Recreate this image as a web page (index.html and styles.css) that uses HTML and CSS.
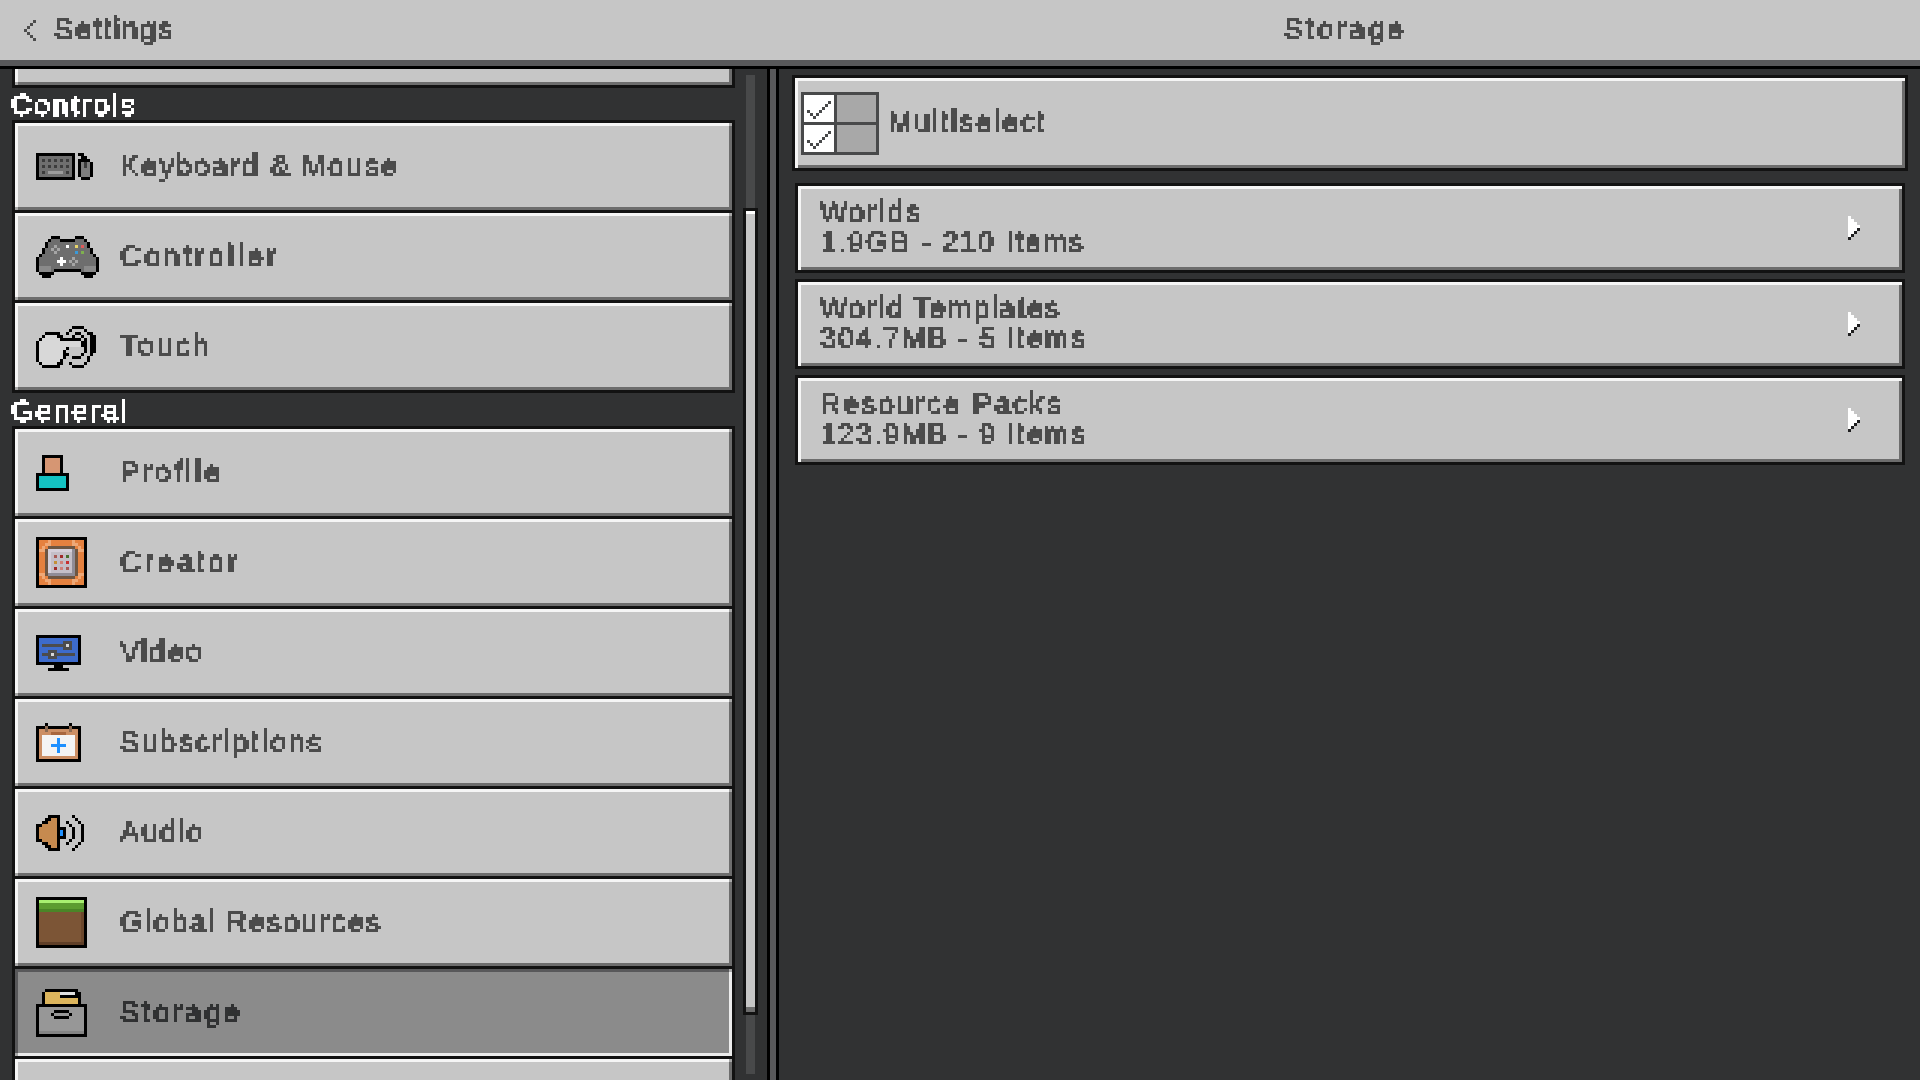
FILE: index.html
```html
<!DOCTYPE html>
<html lang="en">
<head>
<meta charset="utf-8">
<title>Storage</title>
<link rel="stylesheet" href="styles.css">
</head>
<body>
<svg class="defs" width="0" height="0" aria-hidden="true">
  <filter id="pixel" x="0" y="0" width="100%" height="100%" color-interpolation-filters="sRGB">
    <feFlood x="1" y="1" width="1" height="1"/>
    <feComposite width="3" height="3"/>
    <feTile result="grid"/>
    <feComposite in="SourceGraphic" in2="grid" operator="in"/>
    <feMorphology operator="dilate" radius="1"/>
    <feComponentTransfer>
      <feFuncA type="discrete" tableValues="0 1 1 1"/>
    </feComponentTransfer>
  </filter>
</svg>

<header class="topbar">
  <div class="back">
    <svg class="icon" width="12" height="21" viewBox="0 0 4 7"><path fill="#4c4c4c" d="M3 0h1v1H3zM2 1h1v1H2zM1 2h1v1H1zM0 3h1v1H0zM1 4h1v1H1zM2 5h1v1H2zM3 6h1v1H3z"/></svg>
    <span class="label back-label">Settings</span>
  </div>
  <div class="title"><span class="label wide">Storage</span></div>
</header>

<main class="main">
  <section class="left">
    <div class="list">
      <div class="group">
        <div class="item stub"></div>
      </div>
      <h2 class="heading heading-first"><span class="label loose">Controls</span></h2>
      <div class="group">
        <div class="item">
          <div class="slot"><svg class="icon" width="57" height="27" viewBox="0 0 19 9">
            <path d="M0 0h13v9H0zM14 0h2v1h-2zM15 1h2v1h-2zM14 2h4v1h-4zM14 3h5v5h-5zM15 8h3v1h-3z"/>
            <path fill="#6f6f6f" d="M1 1h11v7H1z"/>
            <path fill="#7d7d7d" d="M15 3h3v5h-3z"/>
            <path fill="#3c3c3c" d="M2 2h1v1H2zM4 2h1v1H4zM6 2h1v1H6zM8 2h1v1H8zM10 2h1v1h-1zM2 4h1v1H2zM4 4h1v1H4zM6 4h1v1H6zM8 4h1v1H8zM10 4h1v1h-1zM2 6h1v1H2zM10 6h1v1h-1zM16 3h1v2h-1z"/>
            <path fill="#9c9c9c" d="M4 6h5v1H4z"/>
          </svg></div>
          <span class="label">Keyboard &amp; Mouse</span>
        </div>
        <div class="item">
          <div class="slot"><svg class="icon" width="63" height="42" viewBox="0 0 21 14">
            <path d="M5 0h3v1H5zM13 0h3v1h-3zM4 1h13v1H4zM3 2h15v2H3zM2 4h17v2H2zM1 6h19v1H1zM0 7h21v5H0zM1 12h5v1H1zM15 12h5v1h-5zM2 13h3v1H2zM16 13h3v1h-3z"/>
            <path fill="#6e6e6e" d="M5 1h3v1H5zM13 1h3v1h-3zM4 2h13v2H4zM3 4h15v2H3zM2 6h17v1H2zM1 7h19v3H1zM1 10h5v2H1zM15 10h5v2h-5zM6 10h9v1H6z"/>
            <path fill="#8a8a8a" d="M1 10h4v2H1zM16 10h4v2h-4z"/>
            <path fill="#a5a5a5" d="M6 3h1v1H6zM5 4h1v1H5zM7 4h1v1H7zM6 5h1v1H6zM12 7h1v1h-1zM11 8h1v1h-1zM13 8h1v1h-1zM12 9h1v1h-1z"/>
            <path fill="#fff" d="M10 3h1v1h-1zM8 7h1v3H8zM7 8h3v1H7z"/>
            <path fill="#e8d56a" d="M13 3h1v1h-1z"/>
            <path fill="#e05a5a" d="M15 3h1v1h-1z"/>
            <path fill="#3a9ad9" d="M13 5h1v1h-1z"/>
            <path fill="#7fb04f" d="M15 5h1v1h-1z"/>
          </svg></div>
          <span class="label widest">Controller</span>
        </div>
        <div class="item">
          <div class="slot"><svg class="icon" width="60" height="42" viewBox="0 0 20 14">
            <path d="M3 2h5v1H3zM2 3h7v1H2zM1 4h14v1H1zM0 5h16v2H0zM0 7h11v1H0zM0 8h10v3H0zM0 11h9v1H0zM1 12h8v1H1zM2 13h6v1H2z"/>
            <path fill="#d8d8d8" d="M3 3h4v1H3zM2 4h6v1H2zM1 5h14v2H1zM1 7h9v1H1zM1 8h8v3H1zM1 11h7v1H1zM2 12h5v1H2z"/>
            <path d="M12 0h4v1h-4zM11 1h1v1h-1zM16 1h1v1h-1zM10 2h1v1h-1zM17 2h2v1h-2zM18 3h2v6h-2zM18 9h1v1h-1zM17 10h1v1h-1zM17 11h1v1h-1zM11 12h1v1h-1zM16 12h1v1h-1zM12 13h4v1h-4zM13 2h2v1h-2zM12 3h1v1h-1zM15 3h1v1h-1zM16 4h1v5h-1zM15 9h1v1h-1zM12 10h3v1h-3zM10 9h1v1h-1z"/>
          </svg></div>
          <span class="label wide">Touch</span>
        </div>
      </div>
      <h2 class="heading"><span class="label">General</span></h2>
      <div class="group">
        <div class="item">
          <div class="slot"><svg class="icon" width="33" height="36" viewBox="0 0 11 12">
            <path d="M2 0h7v6H2zM0 6h11v6H0z"/>
            <path fill="#d69673" d="M3 1h5v5H3z"/>
            <path fill="#14c2c2" d="M1 7h9v4H1z"/>
          </svg></div>
          <span class="label wide">Profile</span>
        </div>
        <div class="item">
          <div class="slot"><svg class="icon" width="51" height="51" viewBox="0 0 17 17">
            <path d="M0 0h17v17H0z"/>
            <path fill="#e5813f" d="M1 1h15v15H1z"/>
            <path fill="#efa876" d="M4 1h1v1H4zM12 1h1v1h-1zM3 2h2v1H3zM12 2h2v1h-2zM1 4h1v1H1zM15 4h1v1h-1zM2 3h1v2H2zM14 3h1v2h-1zM1 12h1v1H1zM15 12h1v1h-1zM2 12h1v2H2zM14 12h1v2h-1zM3 14h2v1H3zM12 14h2v1h-2zM4 15h1v1H4zM12 15h1v1h-1z"/>
            <path fill="#6e5642" d="M4 3h9v1H4zM3 4h11v9H3zM4 13h9v1H4z"/>
            <path fill="#8f8c96" d="M4 4h9v9H4z"/>
            <path fill="#d5d0da" d="M4 4h8v1H4zM4 5h1v7H4z"/>
            <path fill="#c4bfc8" d="M5 5h7v7H5z"/>
            <path fill="#a85a55" d="M6 6h1v1H6zM10 10h1v1h-1z"/>
            <path fill="#a02a2a" d="M8 6h1v1H8zM6 10h1v1H6z"/>
            <path fill="#46702e" d="M10 6h1v1h-1z"/>
            <path fill="#c49038" d="M6 8h1v1H6z"/>
            <path fill="#d08078" d="M8 8h1v1H8zM8 10h1v1H8z"/>
            <path fill="#c83030" d="M10 8h1v1h-1z"/>
          </svg></div>
          <span class="label widest">Creator</span>
        </div>
        <div class="item">
          <div class="slot"><svg class="icon" width="45" height="36" viewBox="0 0 15 12">
            <path d="M0 0h15v10H0zM6 10h3v1H6zM4 11h7v1H4z"/>
            <path fill="#3d6bcb" d="M1 1h13v8H1z"/>
            <path fill="#4c4c4c" d="M2 3h10v1H2zM9 2h3v3H9zM2 6h11v1H2zM4 5h3v3H4z"/>
            <path fill="#d8d8d8" d="M10 3h1v1h-1zM5 6h1v1H5z"/>
          </svg></div>
          <span class="label">Video</span>
        </div>
        <div class="item">
          <div class="slot"><svg class="icon" width="45" height="39" viewBox="0 0 15 13">
            <path d="M0 1h15v12H0z"/>
            <path fill="#cc8f65" d="M1 2h13v10H1z"/>
            <path fill="#f4f4f4" d="M2 4h11v7H2z"/>
            <path fill="#a8673f" d="M5 3h5v1H5z"/>
            <path d="M3 0h1v1H3zM11 0h1v1h-1z"/>
            <path fill="#8a6a52" d="M3 1h1v2H3zM11 1h1v2h-1z"/>
            <path fill="#1e90ff" d="M7 5h1v5H7zM5 7h5v1H5z"/>
          </svg></div>
          <span class="label loose">Subscriptions</span>
        </div>
        <div class="item">
          <div class="slot"><svg class="icon" width="48" height="36" viewBox="0 0 16 12">
            <path d="M4 0h4v1H4zM3 1h5v1H3zM2 2h6v1H2zM0 3h8v6H0zM2 9h6v1H2zM3 10h5v1H3zM4 11h4v1H4zM8 4h2v1H8zM9 5h1v2H9zM8 7h2v1H8z"/>
            <path fill="#c68a4f" d="M5 1h2v1H5zM4 2h3v1H4zM2 3h5v1H2zM1 4h6v4H1zM2 8h5v1H2zM4 9h3v1H4zM5 10h2v1H5z"/>
            <path fill="#1e90ff" d="M8 5h1v2H8z"/>
            <path d="M12 0h1v1h-1zM13 1h1v1h-1zM14 2h1v1h-1zM15 3h1v6h-1zM14 9h1v1h-1zM13 10h1v1h-1zM12 11h1v1h-1zM10 2h1v1h-1zM11 3h1v1h-1zM12 4h1v4h-1zM11 8h1v1h-1zM10 9h1v1h-1z"/>
          </svg></div>
          <span class="label">Audio</span>
        </div>
        <div class="item">
          <div class="slot"><svg class="icon" width="51" height="51" viewBox="0 0 17 17">
            <path d="M0 0h17v17H0z"/>
            <path fill="#7c5536" d="M1 4h15v12H1z"/>
            <path fill="#6b472c" d="M15 4h1v12h-1z"/>
            <path fill="#5f3f28" d="M1 15h15v1H1z"/>
            <path fill="#a8f070" d="M1 1h15v1H1z"/>
            <path fill="#5c9c30" d="M1 2h15v2H1z"/>
            <path fill="#4a8527" d="M1 4h15v1H1z"/>
          </svg></div>
          <span class="label">Global Resources</span>
        </div>
        <div class="item selected">
          <div class="slot"><svg class="icon" width="51" height="48" viewBox="0 0 17 16">
            <path d="M3 0h11v1H3zM2 1h13v4H2zM0 5h17v11H0z"/>
            <path fill="#dcb55d" d="M3 1h5v1H3zM3 2h11v3H3z"/>
            <path fill="#e0e0e0" d="M8 1h5v1H8z"/>
            <path d="M8 2h6v1H8z"/>
            <path fill="#dcb55d" d="M9 3h4v2H9z"/>
            <path fill="#979797" d="M1 6h15v9H1z"/>
            <path fill="#858585" d="M1 14h15v1H1z"/>
            <path d="M6 7h5v1H6zM5 8h1v1H5zM11 8h1v1h-1zM6 9h5v1H6z"/>
          </svg></div>
          <span class="label wide selected-label">Storage</span>
        </div>
        <div class="item"></div>
      </div>
    </div>
    <div class="rail">
      <div class="track track-top"></div>
      <div class="thumb"></div>
      <div class="track"></div>
    </div>
  </section>

  <div class="divider"></div>

  <section class="right">
    <div class="multi">
      <svg class="icon" width="78" height="63" viewBox="0 0 26 21">
        <path fill="#48494a" d="M0 0h26v21H0z"/>
        <path fill="#fff" d="M1 1h10v9H1zM1 11h10v9H1z"/>
        <path fill="#a8a8a8" d="M12 1h13v9H12zM12 11h13v9H12z"/>
        <path fill="#48494a" d="M2 6h1v1H2zM3 7h1v1H3zM4 8h1v1H4zM5 7h1v1H5zM6 6h1v1H6zM7 5h1v1H7zM8 4h1v1H8zM9 3h1v1H9zM2 16h1v1H2zM3 17h1v1H3zM4 18h1v1H4zM5 17h1v1H5zM6 16h1v1H6zM7 15h1v1H7zM8 14h1v1H8zM9 13h1v1H9z"/>
      </svg>
      <span class="label">Multiselect</span>
    </div>
    <div class="row">
      <div class="row-text"><span class="label">Worlds</span><span class="label tight">1.9GB - 210 Items</span></div>
      <svg class="icon" width="12" height="24" viewBox="0 0 4 8"><path fill="#fff" d="M0 0h1v7H0zM1 1h1v5H1zM2 2h1v3H2zM3 3h1v1H3z"/><path fill="#1e1e1f" d="M3 4h1v1H3zM2 5h1v1H2zM1 6h1v1H1zM0 7h1v1H0z"/></svg>
    </div>
    <div class="row">
      <div class="row-text"><span class="label tight">World Templates</span><span class="label tight">304.7MB - 5 Items</span></div>
      <svg class="icon" width="12" height="24" viewBox="0 0 4 8"><path fill="#fff" d="M0 0h1v7H0zM1 1h1v5H1zM2 2h1v3H2zM3 3h1v1H3z"/><path fill="#1e1e1f" d="M3 4h1v1H3zM2 5h1v1H2zM1 6h1v1H1zM0 7h1v1H0z"/></svg>
    </div>
    <div class="row">
      <div class="row-text"><span class="label loose">Resource Packs</span><span class="label tight">123.9MB - 9 Items</span></div>
      <svg class="icon" width="12" height="24" viewBox="0 0 4 8"><path fill="#fff" d="M0 0h1v7H0zM1 1h1v5H1zM2 2h1v3H2zM3 3h1v1H3z"/><path fill="#1e1e1f" d="M3 4h1v1H3zM2 5h1v1H2zM1 6h1v1H1zM0 7h1v1H0z"/></svg>
    </div>
  </section>
</main>
</body>
</html>
```

FILE: styles.css
```css
* { box-sizing: border-box; }

html, body {
  margin: 0;
  height: 1080px;
  overflow: hidden;
}

body {
  display: flex;
  flex-direction: column;
  width: 1920px;
  background: #313233;
  font-family: "Liberation Sans", Arial, sans-serif;
  font-size: 29px;
  color: #4c4c4c;
}

.defs { position: absolute; }

.icon {
  display: block;
  flex: none;
  shape-rendering: crispEdges;
}

.label {
  display: block;
  height: 30px;
  line-height: 28px;
  letter-spacing: 2px;
  white-space: nowrap;
  -webkit-text-stroke: 0.8px currentColor;
  filter: url(#pixel);
}

.tight { letter-spacing: 1.75px; }
.loose { letter-spacing: 2.25px; }
.wide { letter-spacing: 3px; }
.widest { letter-spacing: 3.4px; }

/* top bar */
.topbar {
  flex: none;
  display: flex;
  height: 69px;
  background: #c6c6c6;
  border-bottom: 3px solid #000;
  box-shadow: inset 0 -9px 0 -3px #58585a;
}

.back {
  flex: none;
  display: flex;
  align-items: center;
  gap: 18px;
  width: 776px;
  height: 60px;
  padding-left: 24px;
}

.title {
  flex: 1;
  display: flex;
  justify-content: center;
  align-items: center;
  height: 60px;
  padding-right: 6px;
}

/* main area */
.main {
  flex: 1;
  display: flex;
  min-height: 0;
}

.left {
  flex: none;
  display: flex;
  width: 770px;
  padding-left: 12px;
  border-right: 3px solid #000;
  overflow: hidden;
}

.divider {
  flex: none;
  width: 6px;
  background: #58585a;
}

.right {
  flex: 1;
  display: flex;
  flex-direction: column;
  gap: 6px;
  padding: 6px 12px 0 13px;
  border-left: 3px solid #000;
}

.list {
  flex: none;
  width: 723px;
}

.group {
  border: 3px solid #121212;
  border-bottom: 0;
}

.group:first-child { border-top: 0; }

.heading {
  display: flex;
  align-items: flex-end;
  height: 33px;
  margin: 0;
  font-size: inherit;
  font-weight: 400;
  color: #fff;
}

.heading .label { line-height: 31px; margin-left: -1px; }

.heading-first { height: 32px; }

.item {
  position: relative;
  display: flex;
  align-items: center;
  height: 90px;
  padding: 0 0 0 21px;
  background: #c6c6c6;
  border-bottom: 3px solid #121212;
  box-shadow: inset 3px 3px 0 #f5f5f5, inset -3px -3px 0 #6d6d6d;
}

.item::before,
.item::after {
  content: "";
  position: absolute;
  width: 3px;
  height: 3px;
  background: #a8a8a8;
}

.item::before { top: 0; right: 0; }
.item::after { bottom: 0; left: 0; }

.stub {
  height: 19px;
  box-shadow: inset 3px 0 0 #f5f5f5, inset -3px -3px 0 #6d6d6d;
}

.stub::before { display: none; }

.slot {
  flex: none;
  display: flex;
  align-items: center;
  width: 84px;
}

.selected {
  background: #8b8b8b;
  box-shadow: inset 3px 3px 0 #58585a, inset -3px -3px 0 #ececec;
}

.selected-label { color: #313233; }

/* scrollbar */
.rail {
  flex: none;
  display: flex;
  flex-direction: column;
  align-items: center;
  width: 15px;
  margin-left: 8px;
  padding: 6px 0;
}

.track {
  flex: 1;
  width: 9px;
  background: #48494a;
}

.track-top { flex: none; height: 133px; }

.thumb {
  flex: none;
  width: 15px;
  height: 807px;
  background: #c6c6c6;
  border: 3px solid #121212;
  box-shadow: inset 0 3px 0 #fff, inset 0 -5px 0 #6d6d6d;
}

/* right panel */
.multi {
  position: relative;
  display: flex;
  align-items: center;
  gap: 9px;
  height: 96px;
  margin-bottom: 6px;
  padding-left: 6px;
  background: #c6c6c6;
  border: 3px solid #121212;
  box-shadow: inset 3px 3px 0 #f5f5f5, inset -3px -3px 0 #6d6d6d;
}

.row {
  display: flex;
  align-items: center;
  justify-content: space-between;
  height: 90px;
  margin: 0 3px;
  padding: 0 42px 0 22px;
  background: #c6c6c6;
  border: 3px solid #121212;
  box-shadow: inset 3px 3px 0 #f5f5f5, inset -3px -3px 0 #6d6d6d;
}

.row-text {
  display: flex;
  flex-direction: column;
}
```
